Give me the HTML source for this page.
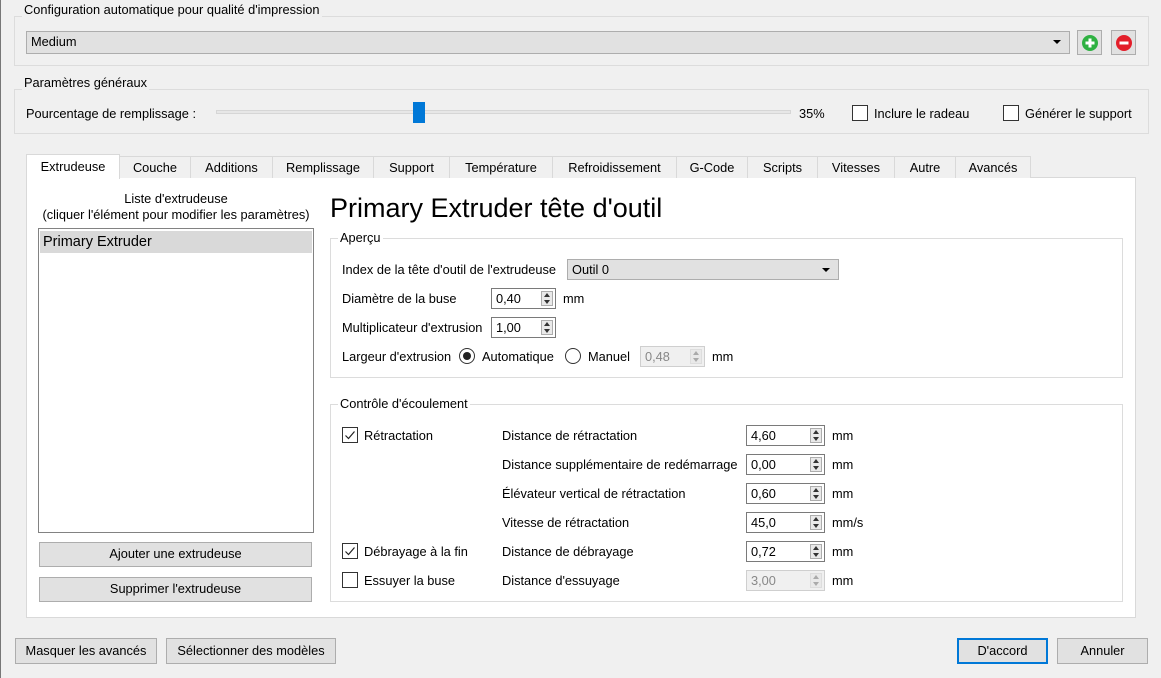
<!DOCTYPE html>
<html><head><meta charset="utf-8"><style>
*{box-sizing:border-box;margin:0;padding:0}
body{width:1161px;height:678px;background:#f0f0f0;font-family:"Liberation Sans",sans-serif;font-size:12.8px;color:#000;position:relative;overflow:hidden}
.a{position:absolute;white-space:nowrap}
.gb{position:absolute;border:1px solid #dcdcdc}
.gt{position:absolute;background:#f0f0f0;padding:0 2px;line-height:14px}
.wt{background:#fff}
.combo{position:absolute;background:#e1e1e1;border:1px solid #adadad;padding-left:4px;line-height:20px}
.combo:after{content:"";position:absolute;right:8px;top:8px;border-left:4px solid transparent;border-right:4px solid transparent;border-top:4px solid #000}
.btn{position:absolute;background:#e1e1e1;border:1px solid #adadad;text-align:center;line-height:22px}
.spin{position:absolute;background:#fff;border:1px solid #7a7a7a;height:21px;padding-left:4px;line-height:19px}
.spin .ar{position:absolute;right:2px;top:2px;width:12px;height:15px;border:1px solid #adadad;background:#e9e9e9}
.spin .ar:before{content:"";position:absolute;left:2px;top:1px;border-left:3px solid transparent;border-right:3px solid transparent;border-bottom:4px solid #333}
.spin .ar:after{content:"";position:absolute;left:2px;bottom:1px;border-left:3px solid transparent;border-right:3px solid transparent;border-top:4px solid #333}
.spin.dis{background:#f0f0f0;border-color:#cfcfcf;color:#888}
.spin.dis .ar{border-color:#ddd}
.spin.dis .ar:before{border-bottom-color:#aaa}.spin.dis .ar:after{border-top-color:#aaa}
.cb{position:absolute;width:16px;height:16px;border:1px solid #333;background:#fff}
.cb svg{position:absolute;left:1px;top:1px}
.tab{position:absolute;top:156px;height:22px;border:1px solid #d9d9d9;border-bottom:none;background:#f0f0f0;text-align:center;line-height:21px}
.rad{position:absolute;width:16px;height:16px;border:1px solid #333;border-radius:50%;background:#fff}
</style></head><body>
<div class="a" style="left:0;top:0;width:1px;height:678px;background:#777"></div>

<div class="gb" style="left:14px;top:16px;width:1135px;height:50px"></div>
<div class="gt" style="left:22px;top:3px">Configuration automatique pour qualité d'impression</div>
<div class="combo" style="left:26px;top:31px;width:1044px;height:23px">Medium</div>
<div class="btn" style="left:1077px;top:30px;width:25px;height:25px"><svg width="18" height="18" style="margin-top:3px" viewBox="0 0 18 18"><circle cx="9" cy="9" r="8" fill="#2fb142"/><path d="M9 4.5v9M4.5 9h9" stroke="#fff" stroke-width="3"/></svg></div>
<div class="btn" style="left:1111px;top:30px;width:25px;height:25px"><svg width="18" height="18" style="margin-top:3px" viewBox="0 0 18 18"><circle cx="9" cy="9" r="8" fill="#e31e2a"/><path d="M4.5 9h9" stroke="#fff" stroke-width="3"/></svg></div>

<div class="gb" style="left:14px;top:89px;width:1135px;height:45px"></div>
<div class="gt" style="left:22px;top:76px">Paramètres généraux</div>
<div class="a" style="left:26px;top:106px">Pourcentage de remplissage :</div>
<div class="a" style="left:216px;top:110px;width:575px;height:4px;background:#e7e7e7;border:1px solid #d6d6d6"></div>
<div class="a" style="left:413px;top:102px;width:12px;height:21px;background:#0078d7"></div>
<div class="a" style="left:799px;top:106px">35%</div>
<div class="cb" style="left:852px;top:105px;border-color:#333"></div>
<div class="a" style="left:874px;top:106px">Inclure le radeau</div>
<div class="cb" style="left:1003px;top:105px"></div>
<div class="a" style="left:1025px;top:106px">Générer le support</div>

<div class="a wt" style="left:26px;top:177px;width:1110px;height:441px;border:1px solid #d9d9d9"></div>
<div class="tab" style="left:119px;width:72px">Couche</div>
<div class="tab" style="left:190px;width:83px">Additions</div>
<div class="tab" style="left:272px;width:102px">Remplissage</div>
<div class="tab" style="left:373px;width:77px">Support</div>
<div class="tab" style="left:449px;width:104px">Température</div>
<div class="tab" style="left:552px;width:125px">Refroidissement</div>
<div class="tab" style="left:676px;width:72px">G-Code</div>
<div class="tab" style="left:747px;width:71px">Scripts</div>
<div class="tab" style="left:817px;width:78px">Vitesses</div>
<div class="tab" style="left:894px;width:62px">Autre</div>
<div class="tab" style="left:955px;width:76px">Avancés</div>
<div class="tab" style="left:26px;top:154px;width:94px;height:25px;background:#fff;line-height:24px">Extrudeuse</div>

<div class="a" style="left:32px;top:191px;width:288px;text-align:center;line-height:16px;white-space:normal">Liste d'extrudeuse<br>(cliquer l'élément pour modifier les paramètres)</div>
<div class="a" style="left:38px;top:228px;width:276px;height:305px;border:1px solid #828282;background:#fff"></div>
<div class="a" style="left:40px;top:231px;width:272px;height:22px;background:#d9d9d9;font-size:14.5px;line-height:23px;padding-left:3px">Primary Extruder</div>
<div class="btn" style="left:39px;top:542px;width:273px;height:25px">Ajouter une extrudeuse</div>
<div class="btn" style="left:39px;top:577px;width:273px;height:25px">Supprimer l'extrudeuse</div>

<div class="a" style="left:330px;top:192px;font-size:27px;line-height:32px">Primary Extruder tête d'outil</div>

<div class="gb" style="left:330px;top:238px;width:793px;height:140px"></div>
<div class="gt wt" style="left:338px;top:231px">Aperçu</div>
<div class="a" style="left:342px;top:262px">Index de la tête d'outil de l'extrudeuse</div>
<div class="combo" style="left:567px;top:259px;width:272px;height:21px;line-height:19px">Outil 0</div>
<div class="a" style="left:342px;top:291px">Diamètre de la buse</div>
<div class="spin" style="left:491px;top:288px;width:65px">0,40<div class="ar"></div></div>
<div class="a" style="left:563px;top:291px">mm</div>
<div class="a" style="left:342px;top:320px">Multiplicateur d'extrusion</div>
<div class="spin" style="left:491px;top:317px;width:65px">1,00<div class="ar"></div></div>
<div class="a" style="left:342px;top:349px">Largeur d'extrusion</div>
<div class="rad" style="left:459px;top:348px"><div style="position:absolute;left:3px;top:3px;width:8px;height:8px;border-radius:50%;background:#222"></div></div>
<div class="a" style="left:482px;top:349px">Automatique</div>
<div class="rad" style="left:565px;top:348px"></div>
<div class="a" style="left:588px;top:349px">Manuel</div>
<div class="spin dis" style="left:640px;top:346px;width:65px">0,48<div class="ar"></div></div>
<div class="a" style="left:712px;top:349px">mm</div>

<div class="gb" style="left:330px;top:404px;width:793px;height:198px"></div>
<div class="gt wt" style="left:338px;top:397px">Contrôle d'écoulement</div>

<div class="cb" style="left:342px;top:427px"><svg width="12" height="12" viewBox="0 0 12 12"><path d="M1.5 6.5l3 3 6-7" fill="none" stroke="#222" stroke-width="1.2"/></svg></div>
<div class="a" style="left:364px;top:428px">Rétractation</div>
<div class="cb" style="left:342px;top:543px"><svg width="12" height="12" viewBox="0 0 12 12"><path d="M1.5 6.5l3 3 6-7" fill="none" stroke="#222" stroke-width="1.2"/></svg></div>
<div class="a" style="left:364px;top:544px">Débrayage à la fin</div>
<div class="cb" style="left:342px;top:572px"></div>
<div class="a" style="left:364px;top:573px">Essuyer la buse</div>

<div class="a" style="left:502px;top:428px">Distance de rétractation</div>
<div class="spin" style="left:746px;top:425px;width:79px">4,60<div class="ar"></div></div>
<div class="a" style="left:832px;top:428px">mm</div>
<div class="a" style="left:502px;top:457px">Distance supplémentaire de redémarrage</div>
<div class="spin" style="left:746px;top:454px;width:79px">0,00<div class="ar"></div></div>
<div class="a" style="left:832px;top:457px">mm</div>
<div class="a" style="left:502px;top:486px">Élévateur vertical de rétractation</div>
<div class="spin" style="left:746px;top:483px;width:79px">0,60<div class="ar"></div></div>
<div class="a" style="left:832px;top:486px">mm</div>
<div class="a" style="left:502px;top:515px">Vitesse de rétractation</div>
<div class="spin" style="left:746px;top:512px;width:79px">45,0<div class="ar"></div></div>
<div class="a" style="left:832px;top:515px">mm/s</div>
<div class="a" style="left:502px;top:544px">Distance de débrayage</div>
<div class="spin" style="left:746px;top:541px;width:79px">0,72<div class="ar"></div></div>
<div class="a" style="left:832px;top:544px">mm</div>
<div class="a" style="left:502px;top:573px">Distance d'essuyage</div>
<div class="spin dis" style="left:746px;top:570px;width:79px">3,00<div class="ar"></div></div>
<div class="a" style="left:832px;top:573px">mm</div>

<div class="btn" style="left:15px;top:638px;width:142px;height:26px;line-height:24px">Masquer les avancés</div>
<div class="btn" style="left:166px;top:638px;width:170px;height:26px;line-height:24px">Sélectionner des modèles</div>
<div class="btn" style="left:957px;top:638px;width:91px;height:26px;line-height:22px;border:2px solid #0078d7">D'accord</div>
<div class="btn" style="left:1057px;top:638px;width:91px;height:26px;line-height:24px">Annuler</div>
</body></html>
